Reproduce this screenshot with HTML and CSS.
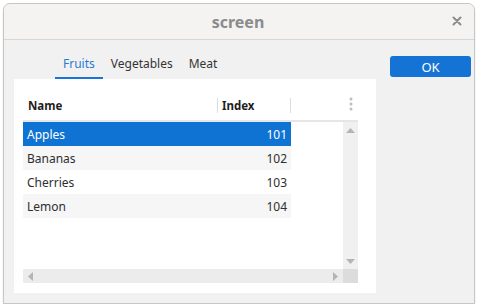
FILE: index.html
```html
<!DOCTYPE html>
<html lang="en">
<head>
    <meta charset="UTF-8">
    <title>screen</title>
    <link rel="stylesheet" href="styles.css">
</head>
<body>

<div class="window">
    <div class="titlebar">
        <span class="title">screen</span>
        <span class="close">
            <svg width="10" height="10" viewBox="0 0 10 10">
                <path d="M1.5 1.5 L8.5 8.5 M8.5 1.5 L1.5 8.5" stroke="#8c8c8c" stroke-width="2" stroke-linecap="round"/>
            </svg>
        </span>
    </div>

    <div class="content">
        <div class="main">
            <div class="tabs">
                <div class="tab active">Fruits</div>
                <div class="tab">Vegetables</div>
                <div class="tab">Meat</div>
            </div>

            <div class="panel">
                <div class="table">
                    <div class="header">
                        <div class="head-cell name-col">Name</div>
                        <div class="sep"></div>
                        <div class="head-cell index-col">Index</div>
                        <div class="sep"></div>
                        <div class="head-rest"></div>
                        <div class="menu">
                            <svg width="4" height="14" viewBox="0 0 4 14">
                                <circle cx="2" cy="2" r="1.5" fill="#bdbdbd"/>
                                <circle cx="2" cy="7" r="1.5" fill="#bdbdbd"/>
                                <circle cx="2" cy="12" r="1.5" fill="#bdbdbd"/>
                            </svg>
                        </div>
                    </div>

                    <div class="body">
                        <div class="viewport">
                            <div class="row selected"><span class="name-col">Apples</span><span class="index-col">101</span></div>
                            <div class="row alt"><span class="name-col">Bananas</span><span class="index-col">102</span></div>
                            <div class="row"><span class="name-col">Cherries</span><span class="index-col">103</span></div>
                            <div class="row alt"><span class="name-col">Lemon</span><span class="index-col">104</span></div>
                        </div>
                        <div class="vscroll">
                            <svg width="9" height="5" viewBox="0 0 9 5"><path d="M0 5 L4.5 0 L9 5 Z" fill="#b4b4b4"/></svg>
                            <svg width="9" height="5" viewBox="0 0 9 5"><path d="M0 0 L4.5 5 L9 0 Z" fill="#b4b4b4"/></svg>
                        </div>
                        <div class="hscroll">
                            <svg width="5" height="9" viewBox="0 0 5 9"><path d="M5 0 L0 4.5 L5 9 Z" fill="#b4b4b4"/></svg>
                            <svg width="5" height="9" viewBox="0 0 5 9"><path d="M0 0 L5 4.5 L0 9 Z" fill="#b4b4b4"/></svg>
                        </div>
                        <div class="corner"></div>
                    </div>
                </div>
            </div>
        </div>

        <button class="ok">OK</button>
    </div>
</div>

</body>
</html>
```

FILE: styles.css
```css
body {
    margin: 0;
    background-color: #ffffff;
    font-family: 'Noto Sans', 'DejaVu Sans', sans-serif;
    font-size: 12px;
    color: #2e2e2e;
}

.window {
    margin: 3px 0 0 3px;
    width: 472px;
    height: 301px;
    box-sizing: border-box;
    border: 1px solid #c6c6c6;
    border-radius: 7px 7px 0 0;
    background-color: #f1f1f1;
    box-shadow: 0 1px 2px rgba(0, 0, 0, 0.12);
    overflow: hidden;
}

.titlebar {
    height: 36px;
    box-sizing: border-box;
    border-bottom: 1px solid #d9d6d3;
    background-color: #f4f3f2;
    display: flex;
    align-items: center;
    justify-content: center;
    position: relative;
}

.title {
    font-size: 16px;
    font-weight: bold;
    color: #8b8b8b;
    margin-left: -2px;
}

/* close button sits over the title bar */
.close {
    position: absolute;
    right: 12px;
    top: 12px;
    display: flex;
}

.content {
    display: flex;
    padding: 10px 3px 0 10px;
    gap: 14px;
}

.main {
    width: 362px;
}

.tabs {
    display: flex;
    padding-left: 41px;
    height: 29px;
}

.tab {
    display: flex;
    align-items: center;
    padding: 0 8px;
    box-sizing: border-box;
    border-bottom: 2px solid transparent;
    color: #333333;
}

.tab.active {
    color: #2a7ad5;
    border-bottom-color: #1a73d6;
}

.panel {
    background-color: #ffffff;
    padding: 11px 18px 10px 9px;
}

.header {
    display: flex;
    align-items: center;
    height: 32px;
    box-sizing: border-box;
    border-bottom: 2px solid #e6e6e6;
}

.head-cell {
    font-weight: bold;
    font-size: 11.5px;
    color: #1e1e1e;
}

.head-cell.name-col {
    width: 189px;
    padding-left: 5px;
}

.head-cell.index-col {
    width: 68px;
    padding-left: 4px;
}

.sep {
    width: 1px;
    height: 15px;
    background-color: #dddddd;
}

.head-rest {
    flex: 1;
}

.menu {
    width: 15px;
    display: flex;
    justify-content: center;
    padding-bottom: 2px;
}

.body {
    display: grid;
    grid-template-columns: 320px 15px;
    grid-template-rows: 147px 14px;
}

.viewport {
    background-color: #ffffff;
}

.row {
    display: flex;
    align-items: center;
    width: 268px;
    height: 24px;
}

.row.alt {
    background-color: #f6f6f6;
}

.row.selected {
    background-color: #0f73d3;
    color: #ffffff;
}

.row .name-col {
    width: 190px;
    padding-left: 4px;
}

.row .index-col {
    width: 70px;
    padding-right: 4px;
    text-align: right;
}

.vscroll {
    background-color: #f0f0f0;
    display: flex;
    flex-direction: column;
    justify-content: space-between;
    align-items: center;
    padding: 6px 0 5px;
}

.hscroll {
    background-color: #ececec;
    display: flex;
    justify-content: space-between;
    align-items: center;
    padding: 0 5px;
}

.corner {
    background-color: #dcdcdc;
}

.ok {
    margin-top: 6px;
    width: 81px;
    height: 21px;
    border: none;
    border-radius: 3px;
    background-color: #1473d5;
    color: #ffffff;
    font-family: inherit;
    font-size: 13px;
    padding: 0;
}
```
